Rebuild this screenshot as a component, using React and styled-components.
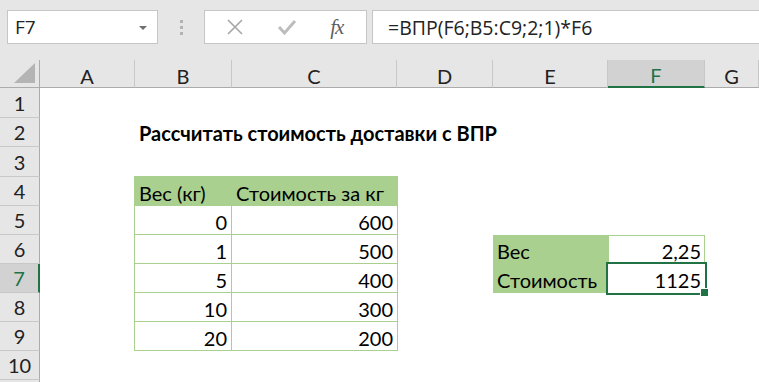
import React from 'react';
import styled, { createGlobalStyle } from 'styled-components';

const GlobalStyle = createGlobalStyle`
  html, body {
    margin: 0;
    padding: 0;
    background: #ffffff;
    overflow: hidden;
  }
  * {
    box-sizing: border-box;
  }
`;

const CELL_FONT = `Lato, 'Liberation Sans', sans-serif`;
const UI_FONT = `'Open Sans', 'Noto Sans', sans-serif`;

const Window = styled.div`
  width: 759px;
  height: 382px;
  display: flex;
  flex-direction: column;
  background: #e6e6e6;
  overflow: hidden;
`;

const FormulaBar = styled.div`
  flex: 0 0 60px;
  display: flex;
  align-items: flex-start;
  padding: 10px 0 0 7px;
`;

const NameBox = styled.div`
  width: 151px;
  height: 34px;
  background: #fff;
  border: 1px solid #c6c6c6;
  display: flex;
  align-items: center;
  justify-content: space-between;
  padding: 0 10px 0 7px;
  font-family: ${UI_FONT};
  font-size: 19px;
  color: #222;
`;

const DropArrow = styled.span`
  width: 0;
  height: 0;
  border-left: 4px solid transparent;
  border-right: 4px solid transparent;
  border-top: 4px solid #6f6f6f;
  margin-top: 2px;
`;

const Grip = styled.div`
  width: 46px;
  height: 34px;
  display: flex;
  flex-direction: column;
  align-items: center;
  justify-content: center;
  gap: 3px;

  & > span {
    width: 3px;
    height: 3px;
    background: #b3b3b3;
  }
`;

const IconBox = styled.div`
  width: 163px;
  height: 34px;
  background: #fff;
  border: 1px solid #c6c6c6;
  display: flex;
  align-items: center;
  justify-content: space-around;
  padding: 0 6px 0 4px;
`;

const Fx = styled.span`
  font-family: 'Liberation Serif', serif;
  font-style: italic;
  font-size: 21px;
  color: #5f5f5f;
  letter-spacing: -1px;
`;

const FormulaInput = styled.div`
  flex: 1;
  height: 34px;
  margin-left: 5px;
  background: #fff;
  border: 1px solid #c6c6c6;
  border-right: none;
  display: flex;
  align-items: center;
  padding-left: 15px;
  font-family: ${UI_FONT};
  font-size: 19.5px;
  color: #222;
`;

const Sheet = styled.div`
  flex: 1;
  min-height: 0;
  overflow: hidden;
  display: grid;
  grid-template-columns: 40px 95px 97px 165px 96px 115px 97px 54px;
  grid-template-rows: 28px 30px 29px 30px repeat(8, 29px);
  background: #fff;
`;

const Corner = styled.div`
  background: #e6e6e6;
  border-right: 1px solid #ababab;
  border-bottom: 1px solid #ababab;
  position: relative;

  &::after {
    content: '';
    position: absolute;
    right: 4px;
    bottom: 4px;
    width: 0;
    height: 0;
    border-left: 21px solid transparent;
    border-bottom: 20px solid #b4b4b4;
  }
`;

const ColHeader = styled.div`
  background: ${p => (p.$active ? '#d2d2d2' : '#e6e6e6')};
  color: ${p => (p.$active ? '#217346' : '#222')};
  border-right: 1px solid #c8c8c8;
  border-bottom: ${p => (p.$active ? '2px solid #217346' : '1px solid #ababab')};
  display: flex;
  align-items: center;
  justify-content: center;
  padding-top: 4px;
  font-family: ${CELL_FONT};
  font-size: 20px;
`;

const RowHeader = styled.div`
  grid-column: 1;
  background: ${p => (p.$active ? '#d2d2d2' : '#e6e6e6')};
  color: ${p => (p.$active ? '#217346' : '#222')};
  border-right: ${p => (p.$active ? '2px solid #217346' : '1px solid #ababab')};
  border-bottom: 1px solid #c8c8c8;
  display: flex;
  align-items: center;
  justify-content: center;
  font-family: ${CELL_FONT};
  font-size: 20px;
`;

const Title = styled.div`
  grid-column: 3 / 7;
  grid-row: 3;
  display: flex;
  align-items: center;
  padding-left: 4px;
  font-family: ${CELL_FONT};
  font-weight: 700;
  font-size: 20px;
  color: #000;
  white-space: nowrap;
`;

const Block = styled.div`
  grid-column: ${p => p.$cols};
  grid-row: ${p => p.$rows};
  display: grid;
  grid-template-columns: ${p => p.$template};
  grid-auto-rows: 1fr;
  gap: 1px;
  background: #a9d08e;
  padding: 1px;
  margin: -1px -1px 0 -1px;
`;

const Cell = styled.div`
  background: ${p => (p.$fill ? '#a9d08e' : '#fff')};
  display: flex;
  align-items: center;
  justify-content: ${p => (p.$right ? 'flex-end' : 'flex-start')};
  padding: 3px 4px 0 4px;
  font-family: ${CELL_FONT};
  font-size: 20px;
  color: #000;
  white-space: nowrap;
  position: relative;
`;

const Selected = styled(Cell)`
  outline: 2px solid #217346;
  outline-offset: 0px;
  z-index: 1;

  &::after {
    content: '';
    position: absolute;
    right: -4px;
    bottom: -4px;
    width: 7px;
    height: 7px;
    background: #217346;
    border: 1px solid #fff;
  }
`;

const LookupBlock = styled(Block)`
  background: transparent;
  gap: 0;
  padding: 0;
  margin: 0;
`;

const LightCell = styled(Cell)`
  box-shadow: inset 0 0 0 1px #a9d08e;
`;

const cols = ['A', 'B', 'C', 'D', 'E', 'F', 'G'];
const rates = [
  [0, 600],
  [1, 500],
  [5, 400],
  [10, 300],
  [20, 200],
];

const CloseIcon = () => (
  <svg width="18" height="18" viewBox="0 0 18 18">
    <path d="M2 2 L16 16 M16 2 L2 16" stroke="#a6a6a6" strokeWidth="1.6" fill="none" />
  </svg>
);

const CheckIcon = () => (
  <svg width="20" height="18" viewBox="0 0 20 18">
    <path d="M2 9 L7.5 15 L18 3" stroke="#bdbdbd" strokeWidth="3" fill="none" strokeLinejoin="miter" />
  </svg>
);

export default function App() {
  return (
    <Window>
      <GlobalStyle />
      <FormulaBar>
        <NameBox>
          F7
          <DropArrow />
        </NameBox>
        <Grip>
          <span />
          <span />
          <span />
        </Grip>
        <IconBox>
          <CloseIcon />
          <CheckIcon />
          <Fx>fx</Fx>
        </IconBox>
        <FormulaInput>=ВПР(F6;B5:C9;2;1)*F6</FormulaInput>
      </FormulaBar>

      <Sheet>
        <Corner />
        {cols.map(c => (
          <ColHeader key={c} $active={c === 'F'}>{c}</ColHeader>
        ))}
        {Array.from({ length: 11 }, (_, i) => (
          <RowHeader key={i} style={{ gridRow: i + 2 }} $active={i + 1 === 7}>
            {i < 10 ? i + 1 : ''}
          </RowHeader>
        ))}

        <Title>Рассчитать стоимость доставки с ВПР</Title>

        <Block $cols="3 / 5" $rows="5 / 11" $template="96px 1fr">
          <Cell $fill>Вес (кг)</Cell>
          <Cell $fill>Стоимость за кг</Cell>
          {rates.map(([w, p]) => (
            <React.Fragment key={w}>
              <Cell $right>{w}</Cell>
              <Cell $right>{p}</Cell>
            </React.Fragment>
          ))}
        </Block>

        <LookupBlock $cols="6 / 8" $rows="7 / 9" $template="115px 97px">
          <Cell $fill>Вес</Cell>
          <LightCell $right>2,25</LightCell>
          <Cell $fill>Стоимость</Cell>
          <Selected $right>1125</Selected>
        </LookupBlock>
      </Sheet>
    </Window>
  );
}
